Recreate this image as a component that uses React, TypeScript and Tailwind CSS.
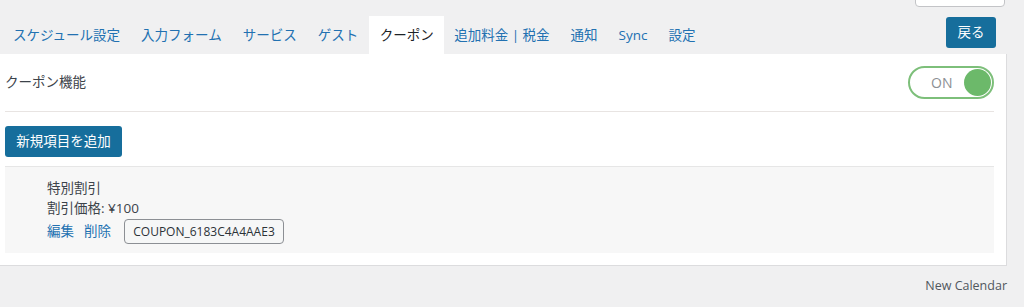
import React from 'react'

const tabs = ['スケジュール設定', '入力フォーム', 'サービス', 'ゲスト', 'クーポン', '追加料金 | 税金', '通知', 'Sync', '設定']

const font = { fontFamily: '"Open Sans", "Noto Sans CJK JP", sans-serif' }

function Toggle() {
  return (
    <div className="flex h-[33px] w-[86px] items-center justify-between rounded-full border-2 border-[#7dbf7a] bg-white pl-[21px] pr-[1px]">
      <span className="text-[14px] leading-none text-[#8c8f94]">ON</span>
      <span className="h-[27px] w-[27px] rounded-full bg-[#6cb96a]" />
    </div>
  )
}

export default function App() {
  return (
    <div className="relative h-[307px] w-[1024px] overflow-hidden bg-[#f0f0f1] text-[#3c434a]" style={font}>
      <div className="absolute right-[19px] top-[-10px] h-[17px] w-[90px] rounded-[4px] border border-[#c3c4c7] bg-white" />

      <div className="flex h-[54px] items-end justify-between pl-[2.5px] pr-[28px]">
        <div className="flex">
          {tabs.map((t) => (
            <div
              key={t}
              className={
                t === 'クーポン'
                  ? 'flex h-[38px] items-center bg-white pl-[11px] pr-[10px] text-[13.5px] text-[#1d2327]'
                  : 'flex h-[38px] items-center px-[10.5px] text-[13.5px] text-[#2271b1]'
              }
            >
              {t}
            </div>
          ))}
        </div>
        <button className="mb-[6px] flex h-[31px] w-[50px] items-center justify-center rounded-[3px] bg-[#166e9c] text-[13.5px] text-white">
          戻る
        </button>
      </div>

      <div className="w-[1007px] border-r border-b border-[#dcdcde] bg-white pb-[12px] pl-[5px] pr-[12px]">
        <div className="flex h-[58px] items-center justify-between border-b border-[#e8e4e2]">
          <span className="text-[13.5px]">クーポン機能</span>
          <Toggle />
        </div>
        <div className="flex h-[55px] items-start border-b border-[#e6e6e6] pt-[14px]">
          <button className="flex h-[31px] w-[117px] items-center justify-center rounded-[3px] bg-[#166e9c] text-[13.5px] text-white">
            新規項目を追加
          </button>
        </div>
        <div className="flex h-[86px] flex-col bg-[#f7f7f7] pl-[42px] pt-[11px]">
          <div className="text-[13.5px] leading-[20px]">特別割引</div>
          <div className="text-[13.5px] leading-[20px]">割引価格: ¥100</div>
          <div className="mt-[1px] flex items-center">
            <span className="text-[13.5px] text-[#2271b1]">編集</span>
            <span className="ml-[10px] text-[13.5px] text-[#2271b1]">削除</span>
            <span className="ml-[13px] flex h-[25px] w-[160px] items-center justify-center rounded-[4px] border border-[#8c8f94] bg-[#f6f7f7] text-[12px] text-[#2c3338]">
              COUPON_6183C4A4AAE3
            </span>
          </div>
        </div>
      </div>

      <div className="flex justify-end pr-[17px] pt-[11px] text-[12.5px] text-[#50575e]">New Calendar</div>
    </div>
  )
}
